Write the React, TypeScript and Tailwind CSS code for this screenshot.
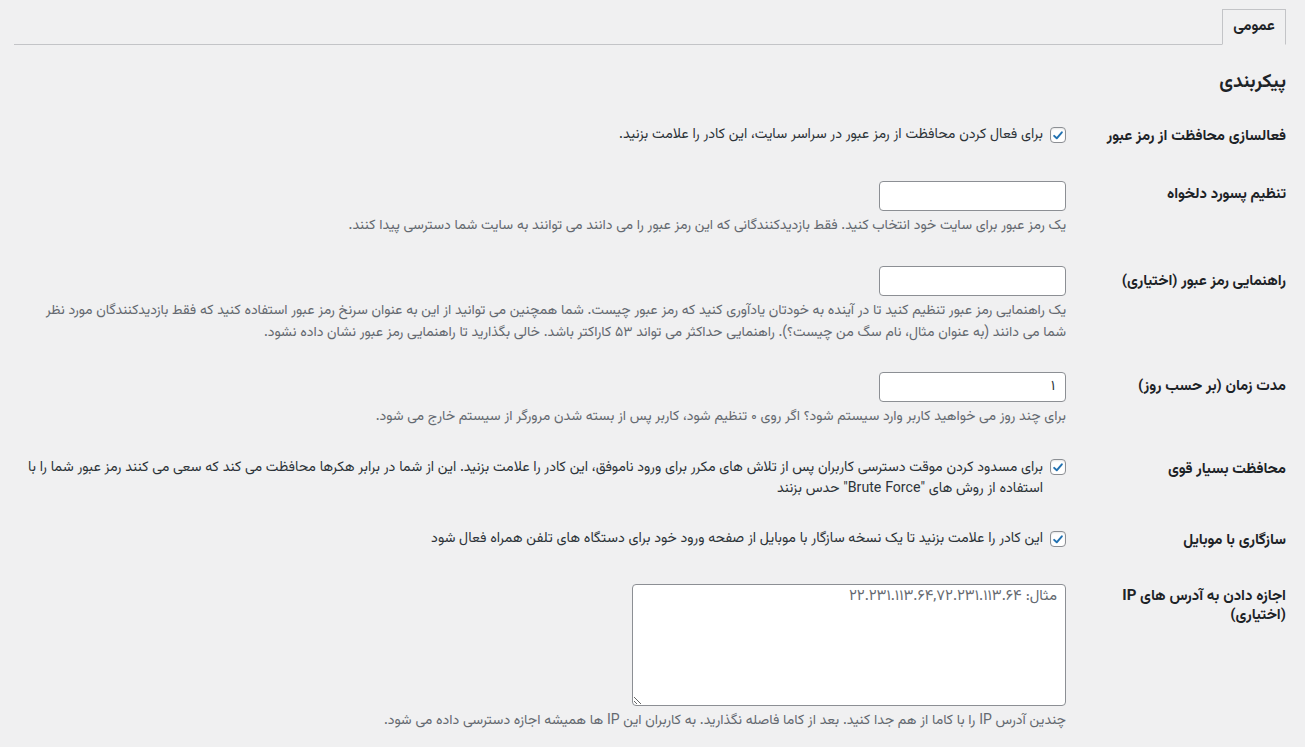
import React from "react";

const FONT = '"Vazirmatn", "Vazir", "Noto Sans Arabic", "DejaVu Sans", sans-serif';

function Check() {
  return (
    <span className="flex h-[16px] w-[16px] shrink-0 items-center justify-center rounded-[4px] border border-[#8c8f94] bg-white shadow-[inset_0_1px_2px_rgba(0,0,0,0.1)]">
      <svg viewBox="0 0 20 20" className="h-[17px] w-[17px]">
        <path d="M4.5 10.5 L8.2 14 L15.5 5.5" fill="none" stroke="#2271b1" strokeWidth="2.8" strokeLinecap="round" strokeLinejoin="round" />
      </svg>
    </span>
  );
}

function Label({ children, pt, leading = "leading-[20px]" }: { children: React.ReactNode; pt: string; leading?: string }) {
  return (
    <div className={`w-[210px] shrink-0 pl-[10px] ${pt}`}>
      <div className={`text-[15px] font-bold text-[#1d2327] ${leading}`}>{children}</div>
    </div>
  );
}

function Desc({ children, mt = "mt-[4px]", nowrap = false }: { children: React.ReactNode; mt?: string; nowrap?: boolean }) {
  return <p className={`${mt} text-[14px] leading-[22px] text-[#646970] ${nowrap ? "whitespace-nowrap" : ""}`}>{children}</p>;
}

function TextInput({ value = "" }: { value?: string }) {
  return (
    <input
      type="text"
      defaultValue={value}
      className="block h-[30px] w-[187px] rounded-[4px] border border-[#8c8f94] bg-white px-[10px] text-[14px] text-[#2c3338] outline-none"
      style={{ fontFamily: FONT }}
    />
  );
}

function CheckRow({ children, nowrap = false, leading = "leading-[20px]" }: { children: React.ReactNode; nowrap?: boolean; leading?: string }) {
  return (
    <div className={`flex items-start gap-[7px] text-[14.15px] text-[#2c3338] ${leading}`}>
      <span className="mt-[2px] flex">
        <Check />
      </span>
      <span className={nowrap ? "whitespace-nowrap" : ""}>{children}</span>
    </div>
  );
}

export default function App() {
  return (
    <div dir="rtl" className="min-h-screen bg-[#f0f0f1] pl-[14px] pr-[19px] pt-[9px]" style={{ fontFamily: FONT }}>
      {/* tabs */}
      <div className="flex border-b border-[#c3c4c7]">
        <div className="-mb-px flex h-[36px] w-[64px] items-center justify-center border border-[#c3c4c7] border-b-[#f0f0f1] bg-[#f0f0f1] text-[15px] font-bold text-[#1d2327]">
          عمومی
        </div>
      </div>

      <h2 className="mt-[27px] text-[19px] font-bold leading-[22px] text-[#1d2327]">پیکربندی</h2>

      {/* row 1 */}
      <div className="mt-[31px] flex">
        <Label pt="pt-[2px]">فعالسازی محافظت از رمز عبور</Label>
        <div className="flex-1 px-[10px]">
          <CheckRow>برای فعال کردن محافظت از رمز عبور در سراسر سایت، این کادر را علامت بزنید.</CheckRow>
        </div>
      </div>

      {/* row 2 */}
      <div className="mt-[34px] flex">
        <Label pt="pt-[4px]">تنظیم پسورد دلخواه</Label>
        <div className="flex-1 px-[10px]">
          <TextInput />
          <Desc>یک رمز عبور برای سایت خود انتخاب کنید. فقط بازدیدکنندگانی که این رمز عبور را می دانند می توانند به سایت شما دسترسی پیدا کنند.</Desc>
        </div>
      </div>

      {/* row 3 */}
      <div className="mt-[29px] flex">
        <Label pt="pt-[6px]">راهنمایی رمز عبور (اختیاری)</Label>
        <div className="flex-1 px-[10px]">
          <TextInput />
          <Desc nowrap>
            یک راهنمایی رمز عبور تنظیم کنید تا در آینده به خودتان یادآوری کنید که رمز عبور چیست. شما همچنین می توانید از این به عنوان سرنخ رمز عبور استفاده کنید که فقط بازدیدکنندگان مورد نظر
            <br />
            شما می دانند (به عنوان مثال، نام سگ من چیست؟). راهنمایی حداکثر می تواند ۵۳ کاراکتر باشد. خالی بگذارید تا راهنمایی رمز عبور نشان داده نشود.
          </Desc>
        </div>
      </div>

      {/* row 4 */}
      <div className="mt-[28px] flex">
        <Label pt="pt-[5px]">مدت زمان (بر حسب روز)</Label>
        <div className="flex-1 px-[10px]">
          <TextInput value="۱" />
          <Desc>برای چند روز می خواهید کاربر وارد سیستم شود؟ اگر روی ۰ تنظیم شود، کاربر پس از بسته شدن مرورگر از سیستم خارج می شود.</Desc>
        </div>
      </div>

      {/* row 5 */}
      <div className="mt-[29px] flex">
        <Label pt="pt-[3px]">محافظت بسیار قوی</Label>
        <div className="flex-1 px-[10px]">
          <CheckRow nowrap leading="leading-[21px]">
            برای مسدود کردن موقت دسترسی کاربران پس از تلاش های مکرر برای ورود ناموفق، این کادر را علامت بزنید. این از شما در برابر هکرها محافظت می کند که سعی می کنند رمز عبور شما را با
            <br />
            استفاده از روش های "Brute Force" حدس بزنند
          </CheckRow>
        </div>
      </div>

      {/* row 6 */}
      <div className="mt-[30px] flex">
        <Label pt="pt-[2px]">سازگاری با موبایل</Label>
        <div className="flex-1 px-[10px]">
          <CheckRow>این کادر را علامت بزنید تا یک نسخه سازگار با موبایل از صفحه ورود خود برای دستگاه های تلفن همراه فعال شود</CheckRow>
        </div>
      </div>

      {/* row 7 */}
      <div className="mt-[33px] flex">
        <Label pt="pt-[3px]" leading="leading-[19px]">اجازه دادن به آدرس های IP (اختیاری)</Label>
        <div className="flex-1 px-[10px]">
          <textarea
            placeholder="مثال: ۲۲.۲۳۱.۱۱۳.۶۴,۷۲.۲۳۱.۱۱۳.۶۴"
            className="block h-[122px] w-[434px] rounded-[4px] border border-[#8c8f94] bg-white px-[8px] py-[1px] text-[15px] leading-[22px] text-[#2c3338] outline-none placeholder:text-[#646970]"
            style={{ fontFamily: FONT }}
          />
          <Desc>چندین آدرس IP را با کاما از هم جدا کنید. بعد از کاما فاصله نگذارید. به کاربران این IP ها همیشه اجازه دسترسی داده می شود.</Desc>
        </div>
      </div>
    </div>
  );
}
